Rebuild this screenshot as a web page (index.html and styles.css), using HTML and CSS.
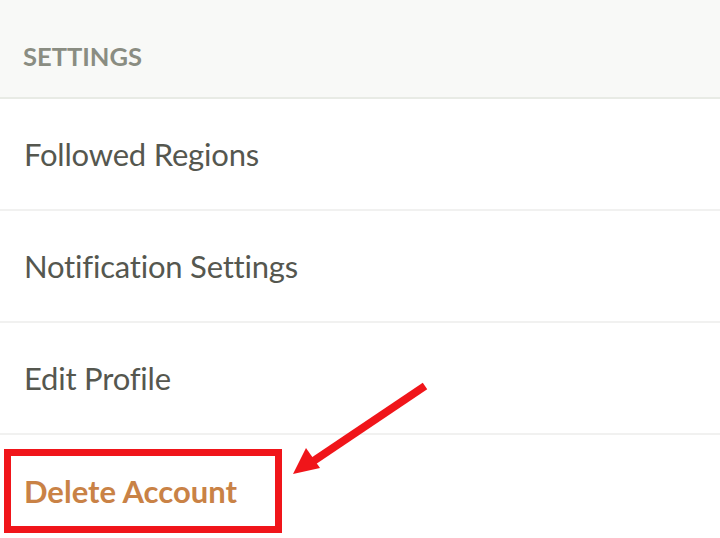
FILE: index.html
```html
<!DOCTYPE html>
<html>
<head>
<meta charset="utf-8">
<link rel="stylesheet" href="styles.css">
</head>
<body>
<div class="panel">
  <div class="header">SETTINGS</div>
  <div class="row">Followed Regions</div>
  <div class="row">Notification Settings</div>
  <div class="row">Edit Profile</div>
  <div class="row danger">Delete Account</div>
</div>
<svg class="arrow" width="720" height="538" viewBox="0 0 720 538">
  <line x1="425" y1="386" x2="312" y2="462" stroke="#f0151a" stroke-width="8"/>
  <polygon points="293,474 306,448 320,468" fill="#f0151a"/>
</svg>
</body>
</html>
```
FILE: styles.css
```css
html, body {
  margin: 0;
  padding: 0;
  background: #ffffff;
}
body {
  width: 720px;
  height: 538px;
  overflow: hidden;
  position: relative;
  font-family: Lato, "Noto Sans", sans-serif;
}
.panel {
  display: flex;
  flex-direction: column;
}
.header {
  height: 99px;
  box-sizing: border-box;
  background: #f8f9f7;
  border-bottom: 2px solid #e8ebe5;
  display: flex;
  align-items: center;
  padding-left: 23px;
  padding-top: 14px;
  font-size: 25.5px;
  font-weight: 700;
  color: #8a8d82;
}
.row {
  height: 112px;
  box-sizing: border-box;
  border-bottom: 2px solid #f1f1f0;
  display: flex;
  align-items: center;
  padding-left: 24px;
  font-size: 31px;
  letter-spacing: -0.2px;
  color: #55574f;
}
.danger {
  position: relative;
  border-bottom: none;
  color: #c98246;
  font-weight: 700;
  letter-spacing: 0;
}
.danger::before {
  content: "";
  position: absolute;
  left: 4px;
  top: 14px;
  width: 278px;
  height: 84px;
  box-sizing: border-box;
  border: 7px solid #f0151a;
}
.arrow {
  position: absolute;
  left: 0;
  top: 0;
}
```
